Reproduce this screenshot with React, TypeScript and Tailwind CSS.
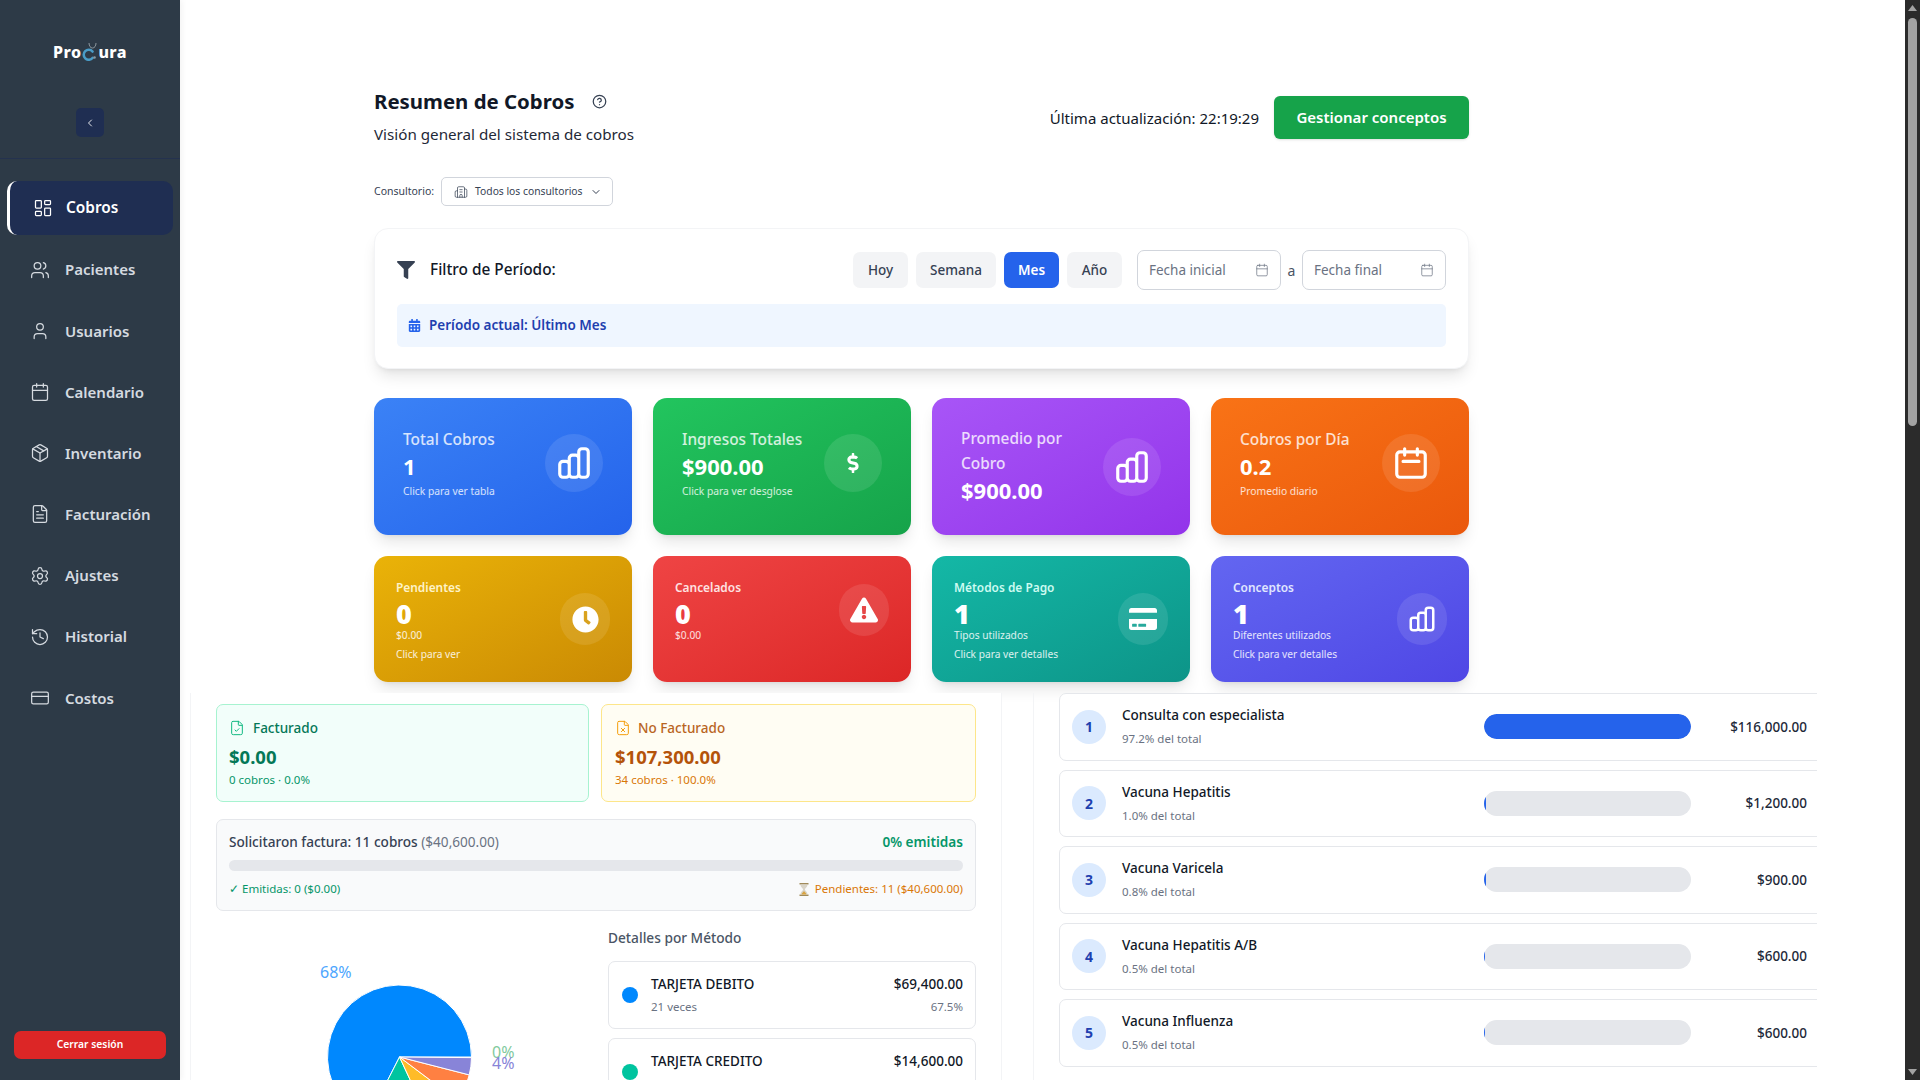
import {
  Building2,
  Calendar,
  ChevronDown,
  ChevronLeft,
  CircleHelp,
  CreditCard,
  FileCheck,
  FileText,
  FileX,
  History,
  LayoutDashboard,
  Package,
  Settings,
  User,
  Users,
} from 'lucide-react';
import { FaCalendarAlt, FaClock, FaCreditCard, FaDollarSign, FaExclamationTriangle, FaFilter } from 'react-icons/fa';
import { HiOutlineCalendar, HiOutlineChartBar } from 'react-icons/hi';

const navItems = [
  { label: 'Pacientes', icon: Users },
  { label: 'Usuarios', icon: User },
  { label: 'Calendario', icon: Calendar },
  { label: 'Inventario', icon: Package },
  { label: 'Facturación', icon: FileText },
  { label: 'Ajustes', icon: Settings },
  { label: 'Historial', icon: History },
  { label: 'Costos', icon: CreditCard },
];

const concepts = [
  { name: 'Consulta con especialista', pct: '97.2% del total', amount: '$116,000.00', width: 100 },
  { name: 'Vacuna Hepatitis', pct: '1.0% del total', amount: '$1,200.00', width: 1 },
  { name: 'Vacuna Varicela', pct: '0.8% del total', amount: '$900.00', width: 1 },
  { name: 'Vacuna Hepatitis A/B', pct: '0.5% del total', amount: '$600.00', width: 0.5 },
  { name: 'Vacuna Influenza', pct: '0.5% del total', amount: '$600.00', width: 0.5 },
];

const slices = [
  { from: 0, to: 243, color: '#0088FE' },
  { from: 243, to: 295, color: '#00C49F' },
  { from: 295, to: 323, color: '#FFBB28' },
  { from: 323, to: 345.6, color: '#FF8042' },
  { from: 345.6, to: 359.5, color: '#8884D8' },
];

function slicePath(cx: number, cy: number, r: number, from: number, to: number) {
  const a = (from * Math.PI) / 180;
  const b = (to * Math.PI) / 180;
  const large = to - from > 180 ? 1 : 0;
  return `M${cx} ${cy}L${cx + r * Math.cos(a)} ${cy - r * Math.sin(a)}A${r} ${r} 0 ${large} 0 ${cx + r * Math.cos(b)} ${cy - r * Math.sin(b)}Z`;
}

function Sidebar() {
  return (
    <aside className="relative z-10 w-[180px] shrink-0 h-full bg-[#2d3a47] flex flex-col shadow-[2px_0_6px_rgba(0,0,0,0.05)]">
      <div className="h-[159px] shrink-0 border-b border-[#24324f] flex flex-col items-center">
        <div className="mt-[40px] h-[24px] flex items-center text-white text-[16px] font-extrabold tracking-[0.4px]">
          <span>Pro</span>
          <svg width="15" height="20" viewBox="0 0 15 20" fill="none" className="mx-[1px] -mt-[3px]">
            <path d="M10.5 10.5A5 5 0 1 0 10.5 17" stroke="#4a9cc7" strokeWidth="2.6" strokeLinecap="round" />
            <path d="M7 2c0 3 1.5 5 3.5 5S14 5 14 2" stroke="#8d989f" strokeWidth="1" />
            <circle cx="12.5" cy="16.5" r="1.3" fill="#8d989f" />
          </svg>
          <span>ura</span>
        </div>
        <button className="mt-[44px] w-[28px] h-[29px] rounded-[5px] bg-[#1f2e52] flex items-center justify-center text-gray-200">
          <ChevronLeft size={12} />
        </button>
      </div>
      <nav className="flex-1 pt-[22px]">
        <div className="ml-[7px] w-[166px] h-[54px] rounded-[10px] border-l-[3px] border-white bg-[#1f2e52] flex items-center pl-[23px] gap-[13px] text-white font-semibold text-[15.4px]">
          <LayoutDashboard size={20} strokeWidth={1.5} />
          <span>Cobros</span>
        </div>
        <div className="mt-[4px] flex flex-col">
          {navItems.map((item) => (
            <div key={item.label} className="h-[61.2px] flex items-center pl-[30px] gap-[15px] text-[#d5dae0] font-semibold text-[15px]">
              <item.icon size={20} strokeWidth={1.5} />
              <span>{item.label}</span>
            </div>
          ))}
        </div>
      </nav>
      <div className="px-[14px] pb-[21px]">
        <button className="w-full h-[28px] rounded-[7px] bg-[#dc2626] text-white text-[10.3px] font-semibold">Cerrar sesión</button>
      </div>
    </aside>
  );
}

function BigCard(props: { title: string; value: string; sub?: string; gradient: string; icon: React.ReactNode }) {
  return (
    <div className={`h-[137px] rounded-[14px] shadow-lg text-white flex items-center justify-between pl-[29px] pr-[29px] ${props.gradient}`}>
      <div className="min-w-0 w-[135px] mb-[3px]">
        <div className="text-[15.4px] leading-[25px] font-medium text-white/80">{props.title}</div>
        <div className="text-[22px] leading-[28px] font-bold">{props.value}</div>
        {props.sub && <div className="text-[10.3px] leading-[23px] text-white/80">{props.sub}</div>}
      </div>
      <div className={`w-[58px] h-[58px] rounded-full bg-white/10 flex items-center justify-center shrink-0 ${props.sub ? 'mb-[7px]' : ''}`}>{props.icon}</div>
    </div>
  );
}

function SmallCard(props: { title: string; value: string; sub: string; extra?: string; gradient: string; icon: React.ReactNode; titleColor: string }) {
  return (
    <div className={`h-[126px] rounded-[14px] shadow-lg text-white flex items-center justify-between pl-[22px] pr-[22px] ${props.gradient}`}>
      <div className="min-w-0 self-start pt-[22px]">
        <div className={`text-[11.9px] leading-[18px] font-semibold ${props.titleColor}`}>{props.title}</div>
        <div className="text-[27px] leading-[27px] mt-[3.5px] font-black">{props.value}</div>
        <div className="text-[10.2px] leading-[17px] text-white/85">{props.sub}</div>
        {props.extra && <div className="text-[10.2px] leading-[18px] mt-[1px] text-white/85">{props.extra}</div>}
      </div>
      <div className={`w-[50px] h-[52px] rounded-full bg-white/10 flex items-center justify-center shrink-0 ${props.extra ? '' : 'mb-[18px]'}`}>{props.icon}</div>
    </div>
  );
}

function Hourglass() {
  return (
    <svg width="10" height="13" viewBox="0 0 10 13">
      <rect x="0.5" y="0" width="9" height="1.5" fill="#a08a5a" />
      <rect x="0.5" y="11.5" width="9" height="1.5" fill="#a08a5a" />
      <path d="M1.5 1.5h7c0 3-2.5 3.5-2.5 5s2.5 2 2.5 5h-7c0-3 2.5-3.5 2.5-5s-2.5-2-2.5-5z" fill="#d9d4c8" />
      <path d="M2.5 11.5c.5-2 2-2.5 2.5-3.5.5 1 2 1.5 2.5 3.5z" fill="#d9a441" />
    </svg>
  );
}

function TopSection() {
  return (
    <div className="shrink-0 ml-[194px] w-[1095px] pt-[88px]">
      <div className="flex justify-between">
        <div>
          <div className="flex items-center gap-[18px]">
            <h1 className="text-[20.4px] leading-[26px] font-bold text-[#111827]">Resumen de Cobros</h1>
            <CircleHelp size={15} className="text-gray-700" />
          </div>
          <p className="mt-[9px] text-[15.2px] leading-[22px] text-[#1f2937]">Visión general del sistema de cobros</p>
        </div>
        <div className="flex items-center self-start gap-[15px] mt-[8px]">
          <span className="text-[15px] leading-[22px] text-[#111827]">Última actualización: 22:19:29</span>
          <button className="w-[195px] h-[43px] rounded-[6px] bg-[#16a34a] text-white text-[15px] font-semibold shadow-sm">Gestionar conceptos</button>
        </div>
      </div>
      <div className="mt-[32px] flex items-center gap-[7px]">
        <span className="text-[10.5px] text-gray-700">Consultorio:</span>
        <div className="w-[172px] h-[29px] rounded-[5px] border border-gray-300 bg-white flex items-center pl-[12px] gap-[7px] text-[10.3px] text-gray-700">
          <Building2 size={14} strokeWidth={1.25} />
          <span>Todos los consultorios</span>
          <ChevronDown size={12} className="ml-[1px]" />
        </div>
      </div>
      <div className="mt-[22px] h-[141px] rounded-[14px] bg-white border border-gray-100 shadow-lg px-[22px] pt-[21px]">
        <div className="h-[40px] flex items-center">
          <FaFilter size={18} className="text-gray-700" />
          <span className="ml-[15px] text-[15.4px] font-medium text-[#111827]">Filtro de Período:</span>
          <div className="ml-auto flex items-center gap-[8px]">
            <button className="w-[55px] h-[36px] rounded-[7px] bg-gray-100 text-[13.5px] font-medium text-gray-700">Hoy</button>
            <button className="w-[80px] h-[36px] rounded-[7px] bg-gray-100 text-[13.5px] font-medium text-gray-700">Semana</button>
            <button className="w-[55px] h-[36px] rounded-[7px] bg-[#2563eb] text-[13.5px] font-semibold text-white">Mes</button>
            <button className="w-[55px] h-[36px] rounded-[7px] bg-gray-100 text-[13.5px] font-medium text-gray-700">Año</button>
          </div>
          <div className="ml-[15px] w-[144px] h-[40px] rounded-[7px] border border-gray-300 flex items-center justify-between px-[11px] text-[13.5px] text-gray-500">
            <span>Fecha inicial</span>
            <Calendar size={14} strokeWidth={1.25} />
          </div>
          <span className="w-[21px] text-center text-[14px] text-gray-600">a</span>
          <div className="w-[144px] h-[40px] rounded-[7px] border border-gray-300 flex items-center justify-between px-[11px] text-[13.5px] text-gray-500">
            <span>Fecha final</span>
            <Calendar size={14} strokeWidth={1.25} />
          </div>
        </div>
        <div className="mt-[14px] h-[43px] rounded-[5px] bg-[#eff6ff] flex items-center pl-[11px] gap-[8px] text-[13.5px] font-semibold text-[#1e40af]">
          <FaCalendarAlt size={13} className="text-[#2563eb]" />
          <span>Período actual: Último Mes</span>
        </div>
      </div>
      <div className="mt-[29px] grid grid-cols-4 gap-x-[21px]">
        <BigCard title="Total Cobros" value="1" sub="Click para ver tabla" gradient="bg-gradient-to-br from-[#3b82f6] to-[#2563eb]" icon={<HiOutlineChartBar size={38} />} />
        <BigCard title="Ingresos Totales" value="$900.00" sub="Click para ver desglose" gradient="bg-gradient-to-br from-[#22c55e] to-[#16a34a]" icon={<FaDollarSign size={20} />} />
        <BigCard title="Promedio por Cobro" value="$900.00" gradient="bg-gradient-to-br from-[#a855f7] to-[#9333ea]" icon={<HiOutlineChartBar size={38} />} />
        <BigCard title="Cobros por Día" value="0.2" sub="Promedio diario" gradient="bg-gradient-to-br from-[#f97316] to-[#ea580c]" icon={<HiOutlineCalendar size={38} />} />
      </div>
      <div className="mt-[21px] grid grid-cols-4 gap-x-[21px]">
        <SmallCard title="Pendientes" titleColor="text-[#fef3c7]" value="0" sub="$0.00" extra="Click para ver" gradient="bg-gradient-to-br from-[#eab308] to-[#ca8a04]" icon={<FaClock size={27} />} />
        <SmallCard title="Cancelados" titleColor="text-[#fee2e2]" value="0" sub="$0.00" gradient="bg-gradient-to-br from-[#ef4444] to-[#dc2626]" icon={<FaExclamationTriangle size={28} />} />
        <SmallCard title="Métodos de Pago" titleColor="text-[#ccfbf1]" value="1" sub="Tipos utilizados" extra="Click para ver detalles" gradient="bg-gradient-to-br from-[#14b8a6] to-[#0d9488]" icon={<FaCreditCard size={28} />} />
        <SmallCard title="Conceptos" titleColor="text-[#e0e7ff]" value="1" sub="Diferentes utilizados" extra="Click para ver detalles" gradient="bg-gradient-to-br from-[#6366f1] to-[#4f46e5]" icon={<HiOutlineChartBar size={30} />} />
      </div>
    </div>
  );
}

function BillingPanel() {
  return (
    <section className="w-[812px] shrink-0 h-full bg-white border-x border-gray-100 pl-[25px] pr-[25px] pt-[11px]">
      <div className="grid grid-cols-[373px_375px] gap-x-[12px]">
        <div className="h-[98px] rounded-[7px] border border-[#a7f3d0] bg-[#f2fefa] pl-[12px] pt-[12px]">
          <div className="flex items-center gap-[8px] text-[13.5px] leading-[22px] font-medium text-[#047857]">
            <FileCheck size={16} strokeWidth={1.5} className="text-[#10b981]" />
            <span>Facturado</span>
          </div>
          <div className="mt-[5px] text-[18.5px] leading-[26px] font-bold text-[#047857]">$0.00</div>
          <div className="mt-[1px] text-[11.5px] leading-[18px] text-[#059669]">0 cobros · 0.0%</div>
        </div>
        <div className="h-[98px] rounded-[7px] border border-[#fde68a] bg-[#fffdf3] pl-[13px] pt-[12px]">
          <div className="flex items-center gap-[7px] text-[13.5px] leading-[22px] font-medium text-[#b9651f]">
            <FileX size={16} strokeWidth={1.5} className="text-[#f59e0b]" />
            <span>No Facturado</span>
          </div>
          <div className="mt-[5px] text-[18.5px] leading-[26px] font-bold text-[#b45309]">$107,300.00</div>
          <div className="mt-[1px] text-[11.5px] leading-[18px] text-[#d97706]">34 cobros · 100.0%</div>
        </div>
      </div>
      <div className="mt-[17px] h-[92px] rounded-[7px] border border-gray-200 bg-[#f9fafb] pl-[12px] pr-[12px] pt-[12px]">
        <div className="flex justify-between text-[13.6px] leading-[20px] font-medium">
          <span className="text-gray-700">
            Solicitaron factura: 11 cobros <span className="font-normal text-gray-500">($40,600.00)</span>
          </span>
          <span className="font-semibold text-[#059669]">0% emitidas</span>
        </div>
        <div className="mt-[8px] h-[11px] rounded-full bg-gray-200" />
        <div className="mt-[9px] flex justify-between text-[11.5px] leading-[18px]">
          <span className="text-[#059669]">✓ Emitidas: 0 ($0.00)</span>
          <span className="flex items-center gap-[6px] text-[#d97706]">
            <Hourglass />
            Pendientes: 11 ($40,600.00)
          </span>
        </div>
      </div>
      <div className="mt-[17px] grid grid-cols-[380px_1fr] gap-x-[12px]">
        <svg width="380" height="180" viewBox="0 0 380 180" className="block">
          {slices.map((s) => (
            <path key={s.color} d={slicePath(183.5, 129, 72, s.from, s.to)} fill={s.color} stroke="#fff" strokeWidth="1" />
          ))}
          <text x="104" y="50" fontSize="16" fill="#4da6fe" fontFamily="Noto Sans, sans-serif">68%</text>
          <text x="276" y="130" fontSize="16" fill="#82ca9d" fontFamily="Noto Sans, sans-serif">0%</text>
          <text x="276" y="141" fontSize="16" fill="#8884d8" fontFamily="Noto Sans, sans-serif">4%</text>
        </svg>
        <div>
          <h3 className="text-[13.7px] leading-[20px] font-medium text-gray-600">Detalles por Método</h3>
          <div className="mt-[13px] flex flex-col gap-[9px]">
            <div className="h-[68px] rounded-[7px] border border-gray-200 bg-white flex items-center pl-[13px] pr-[12px]">
              <div className="w-[16px] h-[16px] rounded-full bg-[#0088FE] shrink-0" />
              <div className="ml-[13px] flex-1">
                <div className="flex justify-between text-[13.5px] leading-[20px] font-medium text-[#111827]">
                  <span>TARJETA DEBITO</span>
                  <span>$69,400.00</span>
                </div>
                <div className="mt-[4px] flex justify-between text-[11.5px] leading-[18px] text-gray-500">
                  <span>21 veces</span>
                  <span>67.5%</span>
                </div>
              </div>
            </div>
            <div className="h-[68px] rounded-[7px] border border-gray-200 bg-white flex items-center pl-[13px] pr-[12px]">
              <div className="w-[16px] h-[16px] rounded-full bg-[#00C49F] shrink-0" />
              <div className="ml-[13px] flex-1">
                <div className="flex justify-between text-[13.5px] leading-[20px] font-medium text-[#111827]">
                  <span>TARJETA CREDITO</span>
                  <span>$14,600.00</span>
                </div>
                <div className="mt-[4px] h-[18px]" />
              </div>
            </div>
          </div>
        </div>
      </div>
    </section>
  );
}

function ConceptsPanel() {
  return (
    <section className="ml-[31px] w-[784px] shrink-0 h-full overflow-hidden border-l border-gray-100 pl-[25px]">
      <div className="w-[770px] flex flex-col gap-[9px]">
        {concepts.map((c, i) => (
          <div key={c.name} className="h-[67.5px] shrink-0 rounded-[7px] border border-gray-200 bg-white flex items-center pl-[12px] pr-[21px]">
            <div className="w-[34px] h-[34px] rounded-full bg-[#dbeafe] text-[#1e40af] text-[14px] font-bold flex items-center justify-center shrink-0">{i + 1}</div>
            <div className="ml-[16px] w-[362px] shrink-0">
              <div className="text-[13.5px] leading-[20px] font-medium text-[#111827]">{c.name}</div>
              <div className="mt-[5px] text-[11.5px] leading-[18px] text-gray-500">{c.pct}</div>
            </div>
            <div className="w-[207px] h-[25px] rounded-full bg-gray-200 overflow-hidden shrink-0">
              <div className="h-full rounded-full bg-[#2563eb]" style={{ width: `${c.width}%` }} />
            </div>
            <div className="flex-1 text-right text-[13.5px] font-medium text-gray-800">{c.amount}</div>
          </div>
        ))}
      </div>
    </section>
  );
}

function Scrollbar() {
  return (
    <div className="w-[15px] shrink-0 h-full bg-[#2b2b2b] flex flex-col items-center">
      <svg width="9" height="6" viewBox="0 0 9 6" className="mt-[5px] shrink-0">
        <path d="M4.5 0L9 6H0z" fill="#a3a3a3" />
      </svg>
      <div className="mt-[7px] w-[9px] h-[408px] rounded-full bg-[#a3a3a3]" />
      <svg width="9" height="6" viewBox="0 0 9 6" className="mt-auto mb-[5px] shrink-0">
        <path d="M4.5 6L9 0H0z" fill="#a3a3a3" />
      </svg>
    </div>
  );
}

export default function App() {
  return (
    <div className="flex h-screen w-full overflow-hidden bg-white font-['Noto_Sans',sans-serif]">
      <Sidebar />
      <main className="flex-1 min-w-0 h-full flex flex-col overflow-hidden">
        <TopSection />
        <div className="flex-1 min-h-0 mt-[11px] pl-[10px] flex overflow-hidden">
          <BillingPanel />
          <ConceptsPanel />
        </div>
      </main>
      <Scrollbar />
    </div>
  );
}
